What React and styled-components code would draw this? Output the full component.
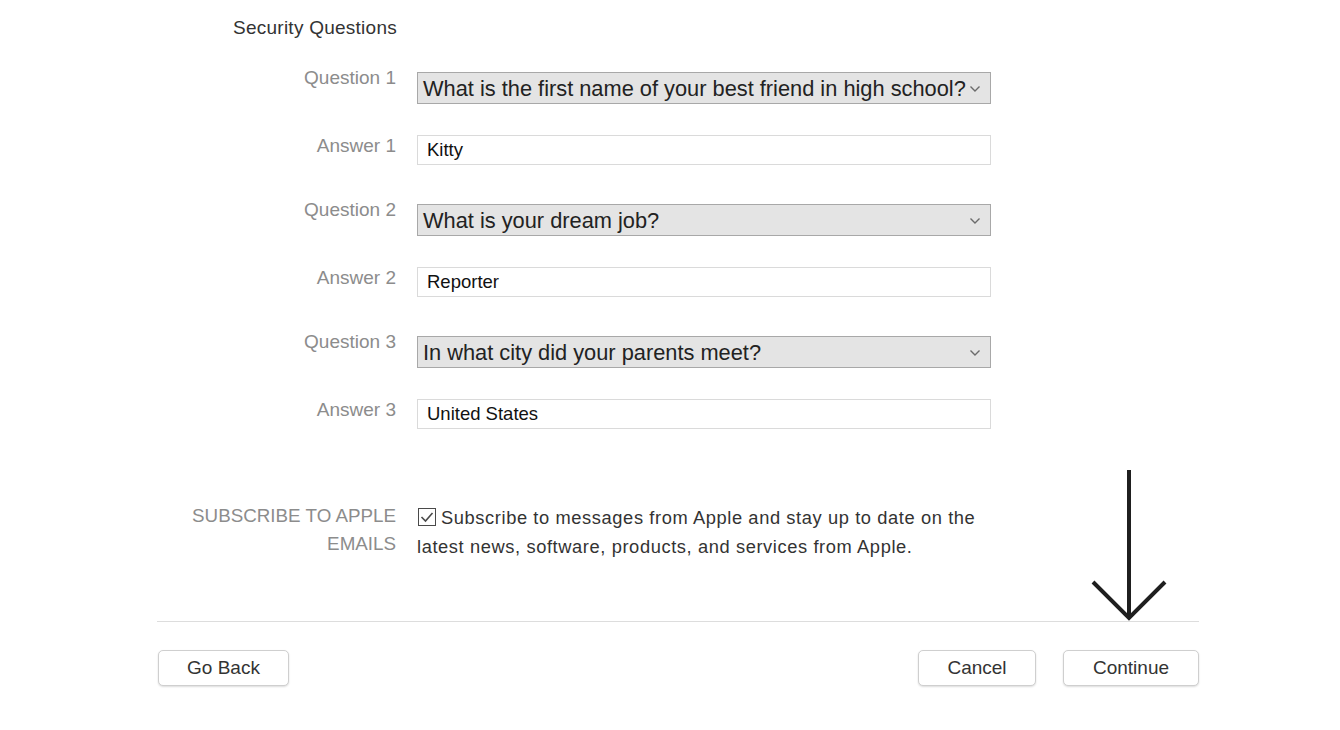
import React from "react";
import styled, { createGlobalStyle } from "styled-components";

const GlobalStyle = createGlobalStyle`
  html, body {
    margin: 0;
    padding: 0;
    background: #ffffff;
    font-family: "Liberation Sans", Arial, sans-serif;
  }
`;

const Page = styled.div`
  position: relative;
  width: 1340px;
  height: 730px;
  overflow: hidden;
  background: #ffffff;
`;

const Content = styled.div`
  width: 1042px;
  margin-left: 157px;
  padding-top: 17px;
`;

const Heading = styled.div`
  padding-left: 76px;
  font-size: 19px;
  line-height: 22px;
  letter-spacing: 0.25px;
  color: #333333;
  margin-bottom: 28px;
`;

const Row = styled.div`
  display: grid;
  grid-template-columns: 239px 574px;
  column-gap: 21px;
  align-items: start;
  margin-bottom: ${(p) => p.$gap}px;
`;

const Label = styled.div`
  text-align: right;
  font-size: ${(p) => (p.$caps ? "18.8px" : "19px")};
  line-height: ${(p) => (p.$caps ? "28px" : "22px")};
  color: #8c8c8c;
  text-transform: ${(p) => (p.$caps ? "uppercase" : "none")};
`;

const SelectBox = styled.div`
  box-sizing: border-box;
  margin-top: 5px;
  height: 32px;
  display: flex;
  align-items: center;
  justify-content: space-between;
  padding: 1px 9px 0 5px;
  background: #e4e4e4;
  border: 1px solid #a8a8a8;
  font-size: 21.8px;
  color: #222222;
  white-space: nowrap;
`;

const Chevron = () => (
  <svg width="12" height="8" viewBox="0 0 12 8">
    <path d="M1.5 1.5 L6 6 L10.5 1.5" fill="none" stroke="#6b6b6b" strokeWidth="1.4" />
  </svg>
);

const TextInput = styled.input`
  box-sizing: border-box;
  width: 574px;
  height: 30px;
  margin: 0;
  padding: 0 9px;
  border: 1px solid #dadada;
  background: #ffffff;
  font-family: "Liberation Sans", Arial, sans-serif;
  font-size: 18.5px;
  color: #111111;
  outline: none;
`;

const SubscribeText = styled.div`
  padding-top: 1px;
  font-size: 18.3px;
  line-height: 29px;
  letter-spacing: 0.6px;
  color: #333333;
`;

const CheckBox = styled.span`
  display: inline-block;
  vertical-align: -2px;
  margin-left: 1px;
  margin-right: 5px;
  width: 18px;
  height: 18px;
`;

const Divider = styled.hr`
  margin: 0;
  border: none;
  border-top: 1px solid #dddddd;
`;

const Footer = styled.div`
  display: flex;
  align-items: center;
  padding-top: 28px;
  gap: 27px;
`;

const Spacer = styled.div`
  flex: 1;
`;

const Button = styled.button`
  box-sizing: border-box;
  width: ${(p) => p.$w}px;
  height: 36px;
  margin-left: ${(p) => (p.$first ? "1px" : "0")};
  background: #ffffff;
  border: 1px solid #cfcfcf;
  border-radius: 5px;
  box-shadow: 0 1px 2px rgba(0, 0, 0, 0.14);
  font-family: "Liberation Sans", Arial, sans-serif;
  font-size: 19px;
  color: #333333;
  padding: 0;
  cursor: pointer;
`;

const Arrow = styled.svg`
  position: absolute;
  left: 1089px;
  top: 468px;
`;

const questions = [
  { q: "What is the first name of your best friend in high school?", a: "Kitty" },
  { q: "What is your dream job?", a: "Reporter" },
  { q: "In what city did your parents meet?", a: "United States" },
];

export default function App() {
  return (
    <Page>
      <GlobalStyle />
      <Content>
        <Heading>Security Questions</Heading>
        {questions.map((item, i) => (
          <React.Fragment key={i}>
            <Row $gap={31}>
              <Label>Question {i + 1}</Label>
              <SelectBox>
                <span>{item.q}</span>
                <Chevron />
              </SelectBox>
            </Row>
            <Row $gap={i === questions.length - 1 ? 73 : 34}>
              <Label>Answer {i + 1}</Label>
              <TextInput defaultValue={item.a} />
            </Row>
          </React.Fragment>
        ))}
        <Row $gap={60}>
          <Label $caps>
            Subscribe to Apple
            <br />
            Emails
          </Label>
          <SubscribeText>
            <CheckBox>
              <svg width="18" height="18" viewBox="0 0 18 18">
                <rect x="0.5" y="0.5" width="17" height="17" fill="#fff" stroke="#4a4a4a" />
                <path d="M3.5 9 L7.5 13 L14.5 5" fill="none" stroke="#4a4a4a" strokeWidth="1.6" />
              </svg>
            </CheckBox>
            Subscribe to messages from Apple and stay up to date on the
            <br />
            latest news, software, products, and services from Apple.
          </SubscribeText>
        </Row>
        <Divider />
        <Footer>
          <Button $w={131} $first>Go Back</Button>
          <Spacer />
          <Button $w={118}>Cancel</Button>
          <Button $w={136}>Continue</Button>
        </Footer>
      </Content>
      <Arrow width="80" height="156" viewBox="0 0 80 156">
        <path d="M40 2 L40 150" stroke="#1f1f1f" strokeWidth="4" fill="none" />
        <path d="M4 114 L40 150 L76 114" stroke="#1f1f1f" strokeWidth="4" fill="none" />
      </Arrow>
    </Page>
  );
}
